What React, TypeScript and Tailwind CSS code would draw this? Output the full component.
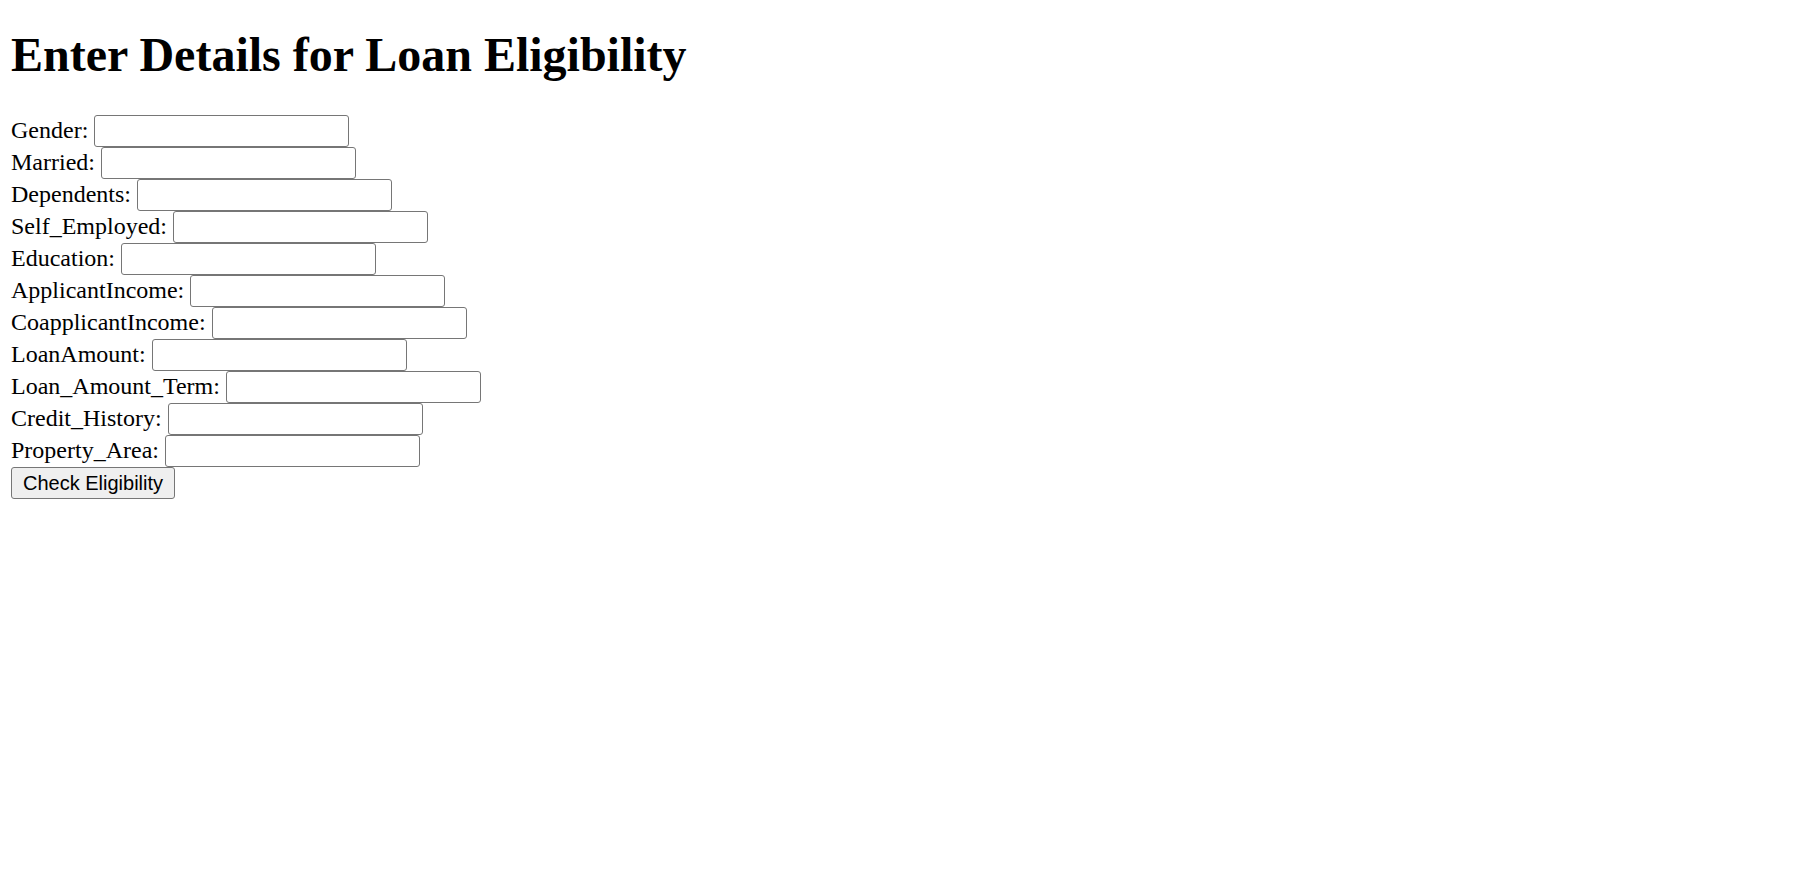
const fields = [
  "Gender",
  "Married",
  "Dependents",
  "Self_Employed",
  "Education",
  "ApplicantIncome",
  "CoapplicantIncome",
  "LoanAmount",
  "Loan_Amount_Term",
  "Credit_History",
  "Property_Area",
];

export default function App() {
  return (
    <div className="min-h-screen bg-white px-[11px] py-3 text-black text-[24px] leading-[normal] font-['Liberation_Serif','Times_New_Roman',serif]">
      <h1 className="mt-[15px] mb-[33px] text-[48px] font-bold leading-[normal]">
        Enter Details for Loan Eligibility
      </h1>
      <form onSubmit={(e) => e.preventDefault()}>
        {fields.map((name) => (
          <div key={name}>
            <label htmlFor={name}>{name}:</label>{" "}
            <input
              id={name}
              name={name}
              type="text"
              className="h-[32px] w-[255px] rounded-[3px] border border-[#767676] bg-white px-[3px] align-baseline text-[20px] font-['Liberation_Sans',Arial,sans-serif]"
            />
          </div>
        ))}
        <button
          type="submit"
          className="h-[32px] rounded-[3px] border border-[#767676] bg-[#efefef] px-[11px] text-[20px] font-['Liberation_Sans',Arial,sans-serif] text-black"
        >
          Check Eligibility
        </button>
      </form>
    </div>
  );
}
